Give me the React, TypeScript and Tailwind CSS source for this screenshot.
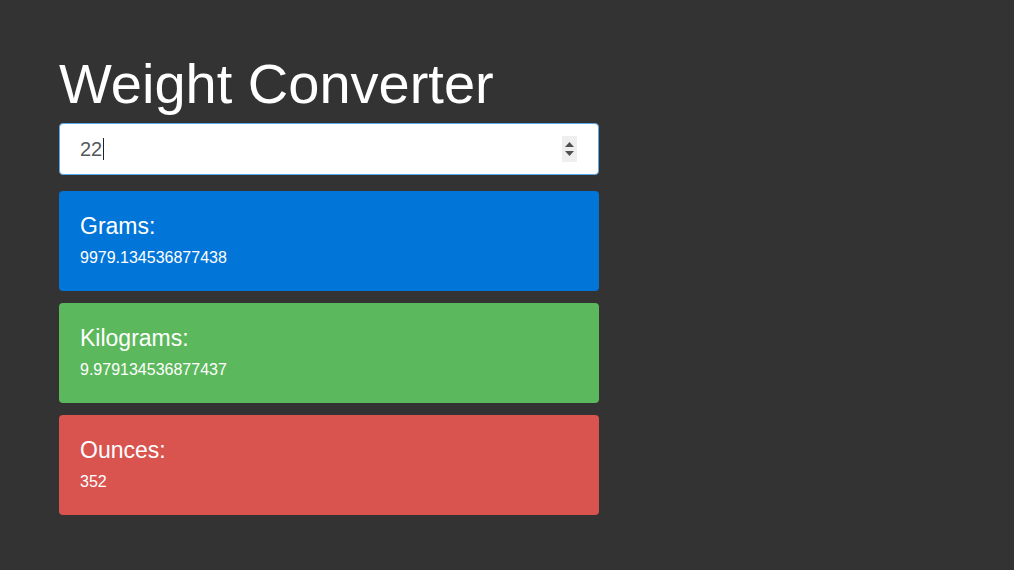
import React from "react";

const cards = [
  { label: "Grams:", value: "9979.134536877438", bg: "bg-[#0275d8]" },
  { label: "Kilograms:", value: "9.979134536877437", bg: "bg-[#5cb85c]" },
  { label: "Ounces:", value: "352", bg: "bg-[#d9534f]" },
];

export default function App() {
  return (
    <div
      className="min-h-screen bg-[#333333] text-white"
      style={{ fontFamily: '"Liberation Sans", Arial, sans-serif' }}
    >
      <div className="w-[540px] ml-[59px] pt-[53px]">
        <h1 className="text-[56px] leading-[1.1] font-normal mb-[8px]">
          Weight Converter
        </h1>

        {/* INPUT */}
        <div className="relative flex items-center h-[52px] rounded-[4px] bg-white border border-[#5aa9ee] px-[20px] mb-[16px]">
          <span className="text-[20px] text-[#55595c] mt-[1px]">22</span>
          <span className="w-px h-[22px] bg-[#222] ml-[1px] mt-[1px]"></span>
          <div className="absolute right-[21px] top-[12px] w-[15px] h-[26px] bg-[#efefef] flex flex-col items-center justify-center gap-[4px]">
            <svg width="9" height="5" viewBox="0 0 9 5">
              <path d="M0 5 L4.5 0 L9 5 Z" fill="#505050" />
            </svg>
            <svg width="9" height="5" viewBox="0 0 9 5">
              <path d="M0 0 L4.5 5 L9 0 Z" fill="#505050" />
            </svg>
          </div>
        </div>

        {/* RESULTS */}
        <div className="flex flex-col gap-[12px]">
          {cards.map((c) => (
            <div
              key={c.label}
              className={`${c.bg} rounded-[4px] h-[100px] px-[21px] pt-[23px]`}
            >
              <h4 className="text-[23px] leading-[1.1] mb-[7px]">{c.label}</h4>
              <p className="text-[16px] leading-[1.5]">{c.value}</p>
            </div>
          ))}
        </div>
      </div>
    </div>
  );
}
